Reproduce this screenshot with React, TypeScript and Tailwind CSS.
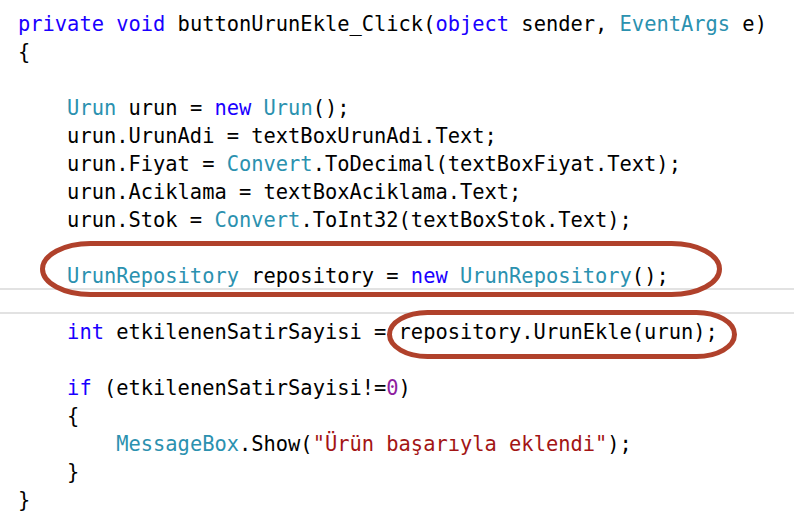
import React from "react";

const K = ({ children }: { children: React.ReactNode }) => <span className="text-[#1a00ff]">{children}</span>;
const T = ({ children }: { children: React.ReactNode }) => <span className="text-[#2b91af]">{children}</span>;
const S = ({ children }: { children: React.ReactNode }) => <span className="text-[#a31515]">{children}</span>;
const N = ({ children }: { children: React.ReactNode }) => <span className="text-[#8f1fa0]">{children}</span>;

const lines: React.ReactNode[] = [
  <>
    <K>private</K> <K>void</K> buttonUrunEkle_Click(<K>object</K> sender, <T>EventArgs</T> e)
  </>,
  <>{"{"}</>,
  <> </>,
  <>
    {"    "}<T>Urun</T> urun = <K>new</K> <T>Urun</T>();
  </>,
  <>{"    "}urun.UrunAdi = textBoxUrunAdi.Text;</>,
  <>
    {"    "}urun.Fiyat = <T>Convert</T>.ToDecimal(textBoxFiyat.Text);
  </>,
  <>{"    "}urun.Aciklama = textBoxAciklama.Text;</>,
  <>
    {"    "}urun.Stok = <T>Convert</T>.ToInt32(textBoxStok.Text);
  </>,
  <> </>,
  <>
    {"    "}<T>UrunRepository</T> repository = <K>new</K> <T>UrunRepository</T>();
  </>,
  <> </>,
  <>
    {"    "}<K>int</K> etkilenenSatirSayisi = repository.UrunEkle(urun);
  </>,
  <> </>,
  <>
    {"    "}<K>if</K> (etkilenenSatirSayisi!=<N>0</N>)
  </>,
  <>{"    {"}</>,
  <>
    {"        "}<T>MessageBox</T>.Show(<S>"Ürün başarıyla eklendi"</S>);
  </>,
  <>{"    }"}</>,
  <>{"}"}</>,
];

export default function App() {
  return (
    <div className="relative w-[794px] h-[523px] bg-white overflow-hidden">
      <div className="absolute left-0 right-0 top-[288px] h-[2px] bg-[#e2e2e2]" />
      <div className="absolute left-0 right-0 top-[312px] h-[2px] bg-[#e2e2e2]" />
      <pre className="relative pl-[18px] pt-[10px] text-[20.4px] leading-[28px] text-black font-['DejaVu_Sans_Mono',monospace]">
        {lines.map((l, i) => (
          <div key={i} className="h-[28px] whitespace-pre">
            {l}
          </div>
        ))}
      </pre>
      <svg className="absolute inset-0 pointer-events-none" width="794" height="523">
        <rect x="42.5" y="243.5" width="677" height="51" rx="48" ry="25.5" fill="none" stroke="#b0412b" strokeWidth="5" />
        <rect x="389.5" y="312.5" width="345" height="44" rx="38" ry="22" fill="none" stroke="#b0412b" strokeWidth="5" />
      </svg>
    </div>
  );
}
